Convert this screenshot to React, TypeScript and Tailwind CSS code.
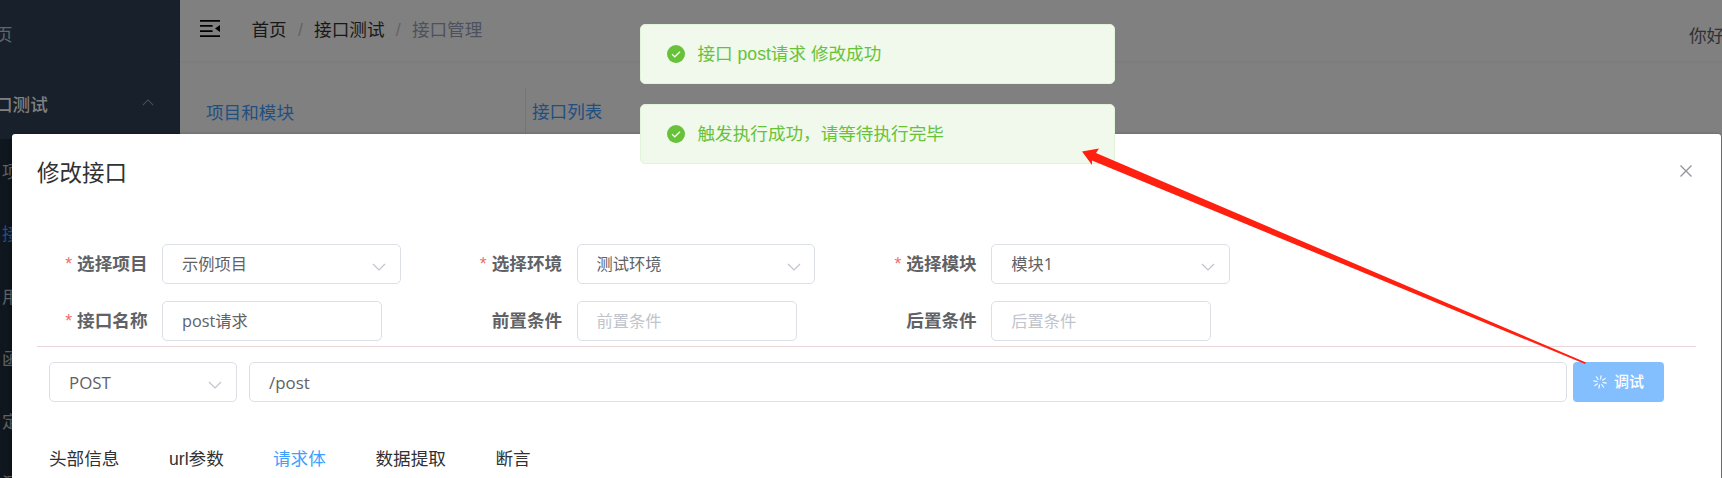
import React from "react";

const ui = "font-['Liberation_Sans','Noto_Sans_CJK_SC',sans-serif] font-normal";
const inputFont = "font-['Open_Sans','Noto_Sans_CJK_SC',sans-serif]";

function Chevron({ up = false, className = "" }: { up?: boolean; className?: string }) {
  return (
    <svg viewBox="0 0 14 8" width="14" height="8" className={className} fill="none" stroke="currentColor" strokeWidth="1.2">
      <path d={up ? "M1 7 L7 1 L13 7" : "M1 1 L7 7 L13 1"} />
    </svg>
  );
}

function Toast({ children }: { children: React.ReactNode }) {
  return (
    <div className="flex h-[60px] w-[475px] items-start rounded-[5px] border border-[#e1f3d8] bg-[#f0f9eb] pl-[26px] pt-[19.5px] text-[17.6px] leading-[18px] text-[#67c23a]">
      <svg viewBox="0 0 18 18" className="mr-[13px] h-[18px] w-[18px] shrink-0">
        <circle cx="9" cy="9" r="9" fill="#67c23a" />
        <path d="M5 9.2 L7.8 11.8 L13 6.7" fill="none" stroke="#f0f9eb" strokeWidth="1.3" />
      </svg>
      <span className="whitespace-pre">{children}</span>
    </div>
  );
}

function Field({ label, required, value, placeholder, select }: { label: string; required?: boolean; value?: string; placeholder?: string; select?: boolean }) {
  return (
    <div className="flex w-[414.6px] items-center">
      <div className="flex w-[125px] shrink-0 justify-end pr-[14.5px] pt-px text-[17.6px] font-bold text-[#606266]">
        {required && <span className="mr-[5px] font-normal text-[#f56c6c]">*</span>}
        <span>{label}</span>
      </div>
      <div className={`flex h-10 items-center justify-between rounded-[5px] border border-[#dcdfe6] pl-[19px] pr-[13.5px] text-[16.25px] ${inputFont} ${select ? "w-[238.6px]" : "w-[220px]"}`}>
        {value ? <span className="pt-px text-[#606266]">{value}</span> : <span className="pt-px text-[#c0c4cc]">{placeholder}</span>}
        {select && <Chevron className="mt-[6px] text-[#c0c4cc]" />}
      </div>
    </div>
  );
}

const sideItems = [
  { text: "项", active: false },
  { text: "接", active: true },
  { text: "用", active: false },
  { text: "函", active: false },
  { text: "定", active: false },
  { text: "测", active: false },
];

const tabs = [
  { text: "头部信息", cls: "w-[120px]" },
  { text: "url参数", cls: "w-[104px]" },
  { text: "请求体", cls: "w-[102.5px] text-[#409eff]" },
  { text: "数据提取", cls: "w-[120px]" },
  { text: "断言", cls: "" },
];

function Background() {
  return (
    <div className="flex h-full w-full">
      <aside className="h-full w-[180px] shrink-0 overflow-hidden bg-[#18202b] text-[17.6px] text-[#60656d]">
        <div className="flex h-[70px] items-center">
          <span className="-ml-[5px]">页</span>
        </div>
        <div className="flex h-[69px] items-center justify-between pr-[26px] font-medium text-[#808080]">
          <span className="-ml-[5px] pt-[2px]">口测试</span>
          <Chevron up className="mb-1 h-[7px] w-3 text-[#48505c]" />
        </div>
        <div className="h-[339px] bg-[#0f161e] pt-px">
          {sideItems.map((item) => (
            <div key={item.text} className={`flex h-[62.5px] items-center pl-[2px] pt-px ${item.active ? "text-[#204f80]" : "text-[#5f6265]"}`}>
              {item.text}
            </div>
          ))}
        </div>
      </aside>
      <main className="min-w-0 grow bg-[#808080] text-[17.6px]">
        <header className="flex h-[62px] items-center border-b border-[#7d7d7d] pb-[3px] pl-[20px] shadow-[0_1px_2px_rgba(0,0,0,0.03)]">
          <svg viewBox="0 0 20 17" className="mb-[2px] h-[17px] w-5 shrink-0" fill="#000">
            <path d="M0 0h20v1.8H0zM0 5h12.6v1.8H0zM0 10.2h12.6v1.8H0zM0 15.2h20V17H0zM20 5v7l-5-3.5z" />
          </svg>
          <div className="ml-[31.5px] flex items-center whitespace-nowrap pt-[2px] text-[#181819]">
            <span>首页</span>
            <span className="mx-[11.25px] text-[#60626a]">/</span>
            <span>接口测试</span>
            <span className="mx-[11.25px] text-[#60626a]">/</span>
            <span className="text-[#4c525d]">接口管理</span>
          </div>
          <span className="ml-auto mt-[14px] w-[33px] whitespace-nowrap text-[#303133]">你好</span>
        </header>
        <div className="flex pt-[26px] text-[#204f80]">
          <div className="w-[346px] border-r border-[#757575] pb-6 pl-[26px] pt-[12px]">项目和模块</div>
          <div className="pl-[6px] pt-[11px]">接口列表</div>
        </div>
      </main>
    </div>
  );
}

export default function App() {
  return (
    <div className={`relative h-[478px] w-[1722px] overflow-hidden ${ui}`}>
      <Background />

      <section className="absolute left-[12px] top-[134px] h-[344px] w-[1709px] rounded-t-[3px] bg-white px-[25px] shadow-[0_1px_4px_rgba(0,0,0,0.4)]">
        <div className="flex h-[110px] items-start justify-between pr-[4px] pt-[22px]">
          <h1 className="pt-px text-[22.5px] leading-[34px] text-[#303133]">修改接口</h1>
          <svg viewBox="0 0 12 12" className="mt-[9px] h-3 w-3" fill="none" stroke="#909399" strokeWidth="1.3">
            <path d="M.5 .5 L11.5 11.5 M11.5 .5 L.5 11.5" />
          </svg>
        </div>
        <div className="flex">
          <Field label="选择项目" required value="示例项目" select />
          <Field label="选择环境" required value="测试环境" select />
          <Field label="选择模块" required value="模块1" select />
        </div>
        <div className="mt-[17px] flex">
          <Field label="接口名称" required value="post请求" />
          <Field label="前置条件" placeholder="前置条件" />
          <Field label="后置条件" placeholder="后置条件" />
        </div>
        <hr className="mt-[5px] border-[#ead6d8]" />
        <div className="mt-[15px] flex pl-[12px] text-[16.9px] text-[#606266]">
          <div className={`flex h-10 w-[188px] items-center justify-between rounded-[5px] border border-[#dcdfe6] pl-[19px] pr-[14px] ${inputFont}`}>
            <span className="pt-px">POST</span>
            <Chevron className="mt-[6px] text-[#c0c4cc]" />
          </div>
          <div className={`ml-[12px] flex h-10 w-[1318px] items-center rounded-[5px] border border-[#dcdfe6] pl-[19px] pt-px ${inputFont}`}>/post</div>
          <button className="ml-[6px] flex h-10 w-[91px] items-center justify-center gap-[7px] rounded-[4px] bg-[#83bfff] text-[15px] font-medium text-white">
            <svg viewBox="0 0 14 14" className="h-[14px] w-[14px]" stroke="#fff" strokeWidth="1.1" strokeLinecap="round">
              <g transform="rotate(10 7 7)">
                <path d="M7 .7V4M7 10v3.3M.7 7H4M10 7h3.3M2.5 2.5l2.3 2.3M9.2 9.2l2.3 2.3M2.5 11.5l2.3-2.3M9.2 4.8l2.3-2.3" />
              </g>
            </svg>
            <span className="pt-px">调试</span>
          </button>
        </div>
        <nav className="mt-[44px] flex whitespace-nowrap pl-[12px] text-[17.6px] leading-[26px] text-[#303133]">
          {tabs.map((tab) => (
            <span key={tab.text} className={tab.cls}>{tab.text}</span>
          ))}
        </nav>
      </section>

      <div className="absolute left-[639.5px] top-[24px] flex flex-col gap-5">
        <Toast>接口 post请求 修改成功</Toast>
        <Toast>触发执行成功，请等待执行完毕</Toast>
      </div>

      <svg className="absolute left-0 top-0" width="1722" height="478" viewBox="0 0 1722 478">
        <path d="M1082 151.5 L1099 148.5 L1096 153 L1586 362.5 L1585 364 L1092 160.5 L1092 165 Z" fill="#ff2010" />
      </svg>
    </div>
  );
}
